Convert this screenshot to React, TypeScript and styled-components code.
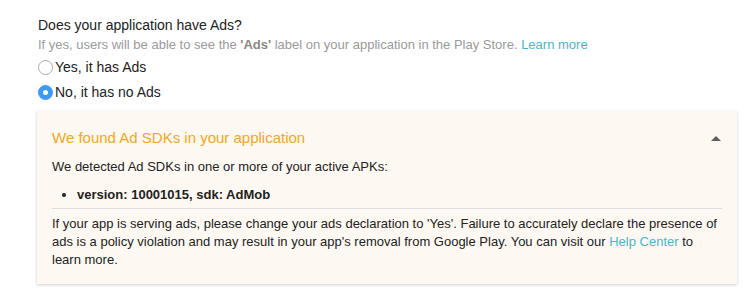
import styled, { createGlobalStyle } from 'styled-components'

const GlobalStyle = createGlobalStyle`
  body {
    margin: 0;
    background: #fff;
    font-family: "Liberation Sans", Arial, sans-serif;
  }
`

export default function App() {
  return (
    <Page>
      <GlobalStyle />
      <Question>Does your application have Ads?</Question>
      <Hint>
        If yes, users will be able to see the <b>'Ads'</b> label on your application in the Play Store.{' '}
        <Link>Learn more</Link>
      </Hint>
      <Options>
        <Option>
          <Radio />
          Yes, it has Ads
        </Option>
        <Option>
          <Radio $checked />
          No, it has no Ads
        </Option>
      </Options>

      <Card>
        <CardHeader>
          <CardTitle>We found Ad SDKs in your application</CardTitle>
          <Caret />
        </CardHeader>
        <Text>We detected Ad SDKs in one or more of your active APKs:</Text>
        <List>
          <li>version: 10001015, sdk: AdMob</li>
        </List>
        <Divider />
        <Paragraph>
          If your app is serving ads, please change your ads declaration to 'Yes'. Failure to accurately declare the
          presence of ads is a policy violation and may result in your app's removal from Google Play. You can visit
          our <Link>Help Center</Link> to learn more.
        </Paragraph>
      </Card>
    </Page>
  )
}

const Page = styled.div`
  padding: 16px 16px 14px 38px;
  color: #222;
`

const Question = styled.div`
  font-size: 14px;
  line-height: 18px;
  color: #222;
`

const Hint = styled.div`
  font-size: 13px;
  line-height: 18px;
  margin-top: 2px;
  color: #9a9a9a;

  b {
    color: #888;
  }
`

const Link = styled.span`
  color: #4ab5cc;
`

const Options = styled.div`
  display: flex;
  flex-direction: column;
  gap: 7px;
  margin-top: 4px;
`

const Option = styled.label`
  display: flex;
  align-items: center;
  font-size: 14px;
  line-height: 18px;
  color: #222;
`

const Radio = styled.span<{ $checked?: boolean }>`
  box-sizing: border-box;
  width: 15px;
  height: 15px;
  border-radius: 50%;
  margin-right: 2px;
  background: ${p => (p.$checked ? '#3b99fc' : '#fff')};
  border: 1px solid ${p => (p.$checked ? '#3b99fc' : '#aaa')};
  display: flex;
  align-items: center;
  justify-content: center;

  &::after {
    content: '';
    display: ${p => (p.$checked ? 'block' : 'none')};
    width: 5px;
    height: 5px;
    border-radius: 50%;
    background: #fff;
  }
`

const Card = styled.div`
  margin-top: 10px;
  margin-left: -1px;
  width: 700px;
  box-sizing: border-box;
  background: #fdf9f2;
  box-shadow: 0 1px 3px rgba(0, 0, 0, 0.2);
  padding: 16px 15px 15px 15px;
`

const CardHeader = styled.div`
  display: flex;
  align-items: center;
  justify-content: space-between;
`

const CardTitle = styled.div`
  font-size: 15px;
  line-height: 22px;
  color: #f5a623;
`

const Caret = styled.span`
  width: 0;
  height: 0;
  border-left: 5px solid transparent;
  border-right: 5px solid transparent;
  border-bottom: 5px solid #5f5f5f;
  margin-right: 1px;
`

const Text = styled.div`
  font-size: 13px;
  line-height: 18px;
  margin-top: 9px;
  color: #222;
`

const List = styled.ul`
  margin: 10px 0 0;
  padding-left: 25px;
  font-size: 13px;
  line-height: 18px;
  font-weight: bold;
  color: #222;
`

const Divider = styled.hr`
  border: none;
  border-top: 1px solid #ddd;
  margin: 4px 0 6px;
`

const Paragraph = styled.div`
  font-size: 13px;
  line-height: 18px;
  color: #222;
`
